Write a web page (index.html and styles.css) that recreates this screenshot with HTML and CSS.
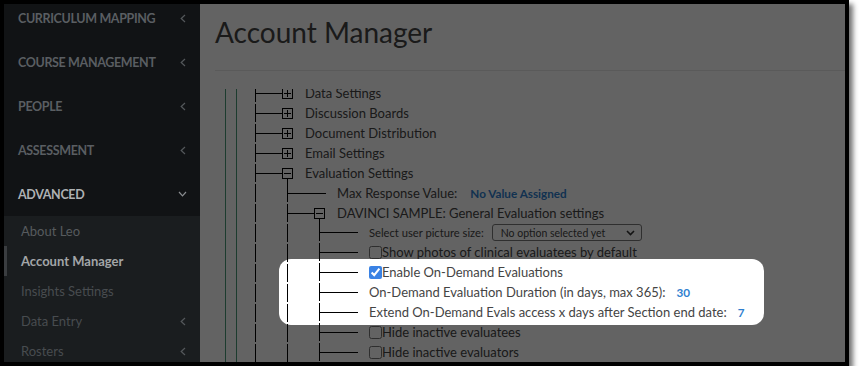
FILE: index.html
```html
<!DOCTYPE html>
<html lang="en">
<head>
<meta charset="utf-8">
<title>Account Manager</title>
<link rel="stylesheet" href="styles.css">
</head>
<body>
<div class="frame">
  <aside class="sidebar">
    <ul class="nav">
      <li class="nav-item"><span>CURRICULUM MAPPING</span><svg class="chev" width="6" height="9" viewBox="0 0 6 9"><polyline points="5,1 1.2,4.5 5,8"/></svg></li>
      <li class="nav-item"><span>COURSE MANAGEMENT</span><svg class="chev" width="6" height="9" viewBox="0 0 6 9"><polyline points="5,1 1.2,4.5 5,8"/></svg></li>
      <li class="nav-item"><span>PEOPLE</span><svg class="chev" width="6" height="9" viewBox="0 0 6 9"><polyline points="5,1 1.2,4.5 5,8"/></svg></li>
      <li class="nav-item"><span>ASSESSMENT</span><svg class="chev" width="6" height="9" viewBox="0 0 6 9"><polyline points="5,1 1.2,4.5 5,8"/></svg></li>
      <li class="nav-item open"><span>ADVANCED</span><svg class="chev down" width="9" height="6" viewBox="0 0 9 6"><polyline points="1,1 4.5,4.8 8,1"/></svg></li>
    </ul>
    <ul class="sub">
      <li class="sub-item">About Leo</li>
      <li class="sub-item active">Account Manager</li>
      <li class="sub-item dim">Insights Settings</li>
      <li class="sub-item dim"><span>Data Entry</span><svg class="chev" width="6" height="9" viewBox="0 0 6 9"><polyline points="5,1 1.2,4.5 5,8"/></svg></li>
      <li class="sub-item dim"><span>Rosters</span><svg class="chev" width="6" height="9" viewBox="0 0 6 9"><polyline points="5,1 1.2,4.5 5,8"/></svg></li>
    </ul>
  </aside>
  <main class="main">
    <h1 class="title">Account Manager</h1>
    <div class="rule"></div>
    <div class="tree-scroll">
      <div class="tree-inner">
        <div class="guide g1">
          <div class="guide g2">
            <ul class="tree">
              <li><div class="row"><span class="hl"></span><span class="box"><svg width="9" height="9" viewBox="0 0 9 9"><path d="M1 4.5H8M4.5 1V8"/></svg></span><span class="label">Data Settings</span></div></li>
              <li><div class="row"><span class="hl"></span><span class="box"><svg width="9" height="9" viewBox="0 0 9 9"><path d="M1 4.5H8M4.5 1V8"/></svg></span><span class="label">Discussion Boards</span></div></li>
              <li><div class="row"><span class="hl"></span><span class="box"><svg width="9" height="9" viewBox="0 0 9 9"><path d="M1 4.5H8M4.5 1V8"/></svg></span><span class="label">Document Distribution</span></div></li>
              <li><div class="row"><span class="hl"></span><span class="box"><svg width="9" height="9" viewBox="0 0 9 9"><path d="M1 4.5H8M4.5 1V8"/></svg></span><span class="label">Email Settings</span></div></li>
              <li>
                <div class="row"><span class="hl"></span><span class="box open"><svg width="9" height="9" viewBox="0 0 9 9"><path d="M1 4.5H8"/></svg></span><span class="label">Evaluation Settings</span></div>
                <ul class="tree">
                  <li><div class="row leaf"><span class="hl"></span><span class="label">Max Response Value:</span><span class="val">No Value Assigned</span></div></li>
                  <li>
                    <div class="row"><span class="hl"></span><span class="box open"><svg width="9" height="9" viewBox="0 0 9 9"><path d="M1 4.5H8"/></svg></span><span class="label">DAVINCI SAMPLE: General Evaluation settings</span></div>
                    <ul class="tree">
                      <li class="short"><div class="row leaf"><span class="hl"></span><span class="label small">Select user picture size:</span><span class="select"><span>No option selected yet</span><svg width="9" height="6" viewBox="0 0 9 6"><polyline points="1,1 4.5,4.5 8,1"/></svg></span></div></li>
                      <li><div class="row leaf"><span class="hl"></span><input type="checkbox" class="cb"><span class="label">Show photos of clinical evaluatees by default</span></div></li>
                      <li><div class="row leaf"><span class="hl"></span><input type="checkbox" class="cb" checked><span class="label">Enable On-Demand Evaluations</span></div></li>
                      <li><div class="row leaf"><span class="hl"></span><span class="label">On-Demand Evaluation Duration (in days, max 365):</span><span class="val num">30</span></div></li>
                      <li><div class="row leaf"><span class="hl"></span><span class="label">Extend On-Demand Evals access x days after Section end date:</span><span class="val num">7</span></div></li>
                      <li><div class="row leaf"><span class="hl"></span><input type="checkbox" class="cb"><span class="label">Hide inactive evaluatees</span></div></li>
                      <li><div class="row leaf"><span class="hl"></span><input type="checkbox" class="cb"><span class="label">Hide inactive evaluators</span></div></li>
                    </ul>
                  </li>
                </ul>
              </li>
            </ul>
          </div>
        </div>
      </div>
    </div>
    <div class="spotlight"></div>
  </main>
</div>
</body>
</html>
```

FILE: styles.css
```css
* { box-sizing: border-box; }
html, body { margin: 0; padding: 0; background: #fff; }
body { font-family: Lato, "Noto Sans", sans-serif; }

.frame {
  width: 849px;
  height: 366px;
  border: 4px solid #000;
  display: flex;
  overflow: hidden;
  box-shadow: 4px 4px 5px rgba(0, 0, 0, 0.55);
}

/* Sidebar */
.sidebar {
  width: 196px;
  flex-shrink: 0;
  background: #111315;
  overflow: hidden;
}
.nav, .sub { list-style: none; margin: 0; padding: 0; }
.nav { margin-top: -8px; }
.nav-item {
  height: 44px;
  display: flex;
  align-items: center;
  justify-content: space-between;
  padding: 0 14px 0 14px;
  font-size: 12.5px;
  font-weight: 700;
  color: #5a5e62;
  letter-spacing: -0.35px;
}
.nav-item.open { color: #aeb1b3; }
.chev { fill: none; stroke: #54585b; stroke-width: 1.2; }
.chev.down { stroke: #8a8d90; margin-right: -1px; }
.sub { background: #1a1d1f; }
.sub-item {
  height: 30px;
  display: flex;
  align-items: center;
  justify-content: space-between;
  padding: 0 14px 0 17px;
  font-size: 13px;
  color: #575b5e;
}
.sub-item.active {
  color: #a3a6a8;
  font-weight: 700;
  border-left: 3px solid #3a3d40;
  padding-left: 14px;
}
.sub-item.dim { color: #484c4f; }

/* Main */
.main {
  flex: 1;
  position: relative;
  overflow: hidden;
  background: #fff;
  display: flex;
  flex-direction: column;
}
.title {
  margin: 0;
  padding: 10px 0 0 15px;
  font-size: 28px;
  line-height: 37px;
  font-weight: 400;
  color: #454545;
}
.rule {
  height: 1px;
  background: #e7e7e7;
  margin: 19px 0 0 15px;
  flex-shrink: 0;
}
.tree-scroll {
  flex: 1;
  min-height: 0;
  overflow: hidden;
  margin-top: 18px;
}
.tree-inner {
  margin-top: -6px;
  padding-left: 25px;
}
.guide { border-left: 1px solid #4c9a7a; }
.g1 { padding-left: 10px; }
.g2 { padding-left: 18px; }

.tree { list-style: none; margin: 0; padding: 0; }
.tree .tree { margin-left: 32px; }
.tree li { position: relative; }
.tree li::before {
  content: "";
  position: absolute;
  left: 0;
  top: 1px;
  bottom: 0;
  width: 1px;
  background: repeating-linear-gradient(to bottom, #000 0 18px, transparent 18px 20px);
}
.row {
  height: 20px;
  display: flex;
  align-items: center;
  white-space: nowrap;
  font-size: 13px;
  color: #444;
}
.short > .row { height: 19px; }
.short::before {
  background: linear-gradient(#000, #000) 0 0 / 1px 17px no-repeat !important;
}
.hl { width: 27px; height: 1px; background: #000; flex-shrink: 0; }
.leaf .hl { width: 39px; margin-right: 11px; }
.box {
  width: 11px;
  height: 11px;
  border: 1px solid #000;
  position: relative;
  flex-shrink: 0;
  display: flex;
  margin-right: 12px;
}
.box svg { display: block; fill: none; stroke: #000; stroke-width: 1; shape-rendering: crispEdges; }
.box.open::after {
  content: "";
  position: absolute;
  left: 4px;
  top: calc(100% + 1px);
  width: 1px;
  height: 6px;
  background: #000;
}
.label.small { font-size: 11.2px; }
.val {
  color: #2f7fcf;
  font-weight: 700;
  font-size: 11.7px;
  margin-left: 13px;
}
.val.num { margin-left: 11px; }
.select {
  display: inline-flex;
  align-items: center;
  justify-content: space-between;
  width: 150px;
  height: 17px;
  margin-left: 8px;
  padding: 0 6px 0 8px;
  border: 1px solid #7a7a7a;
  border-radius: 3px;
  font-size: 10.5px;
  color: #444;
}
.select svg { fill: none; stroke: #333; stroke-width: 1.6; }
.cb {
  margin: 0;
  width: 13px;
  height: 13px;
  flex-shrink: 0;
  accent-color: #3a82e4;
}

.spotlight {
  position: absolute;
  left: 79px;
  top: 255px;
  width: 485px;
  height: 66px;
  border-radius: 12px;
  box-shadow: 0 0 0 900px rgba(0, 0, 0, 0.61);
  pointer-events: none;
}
```
